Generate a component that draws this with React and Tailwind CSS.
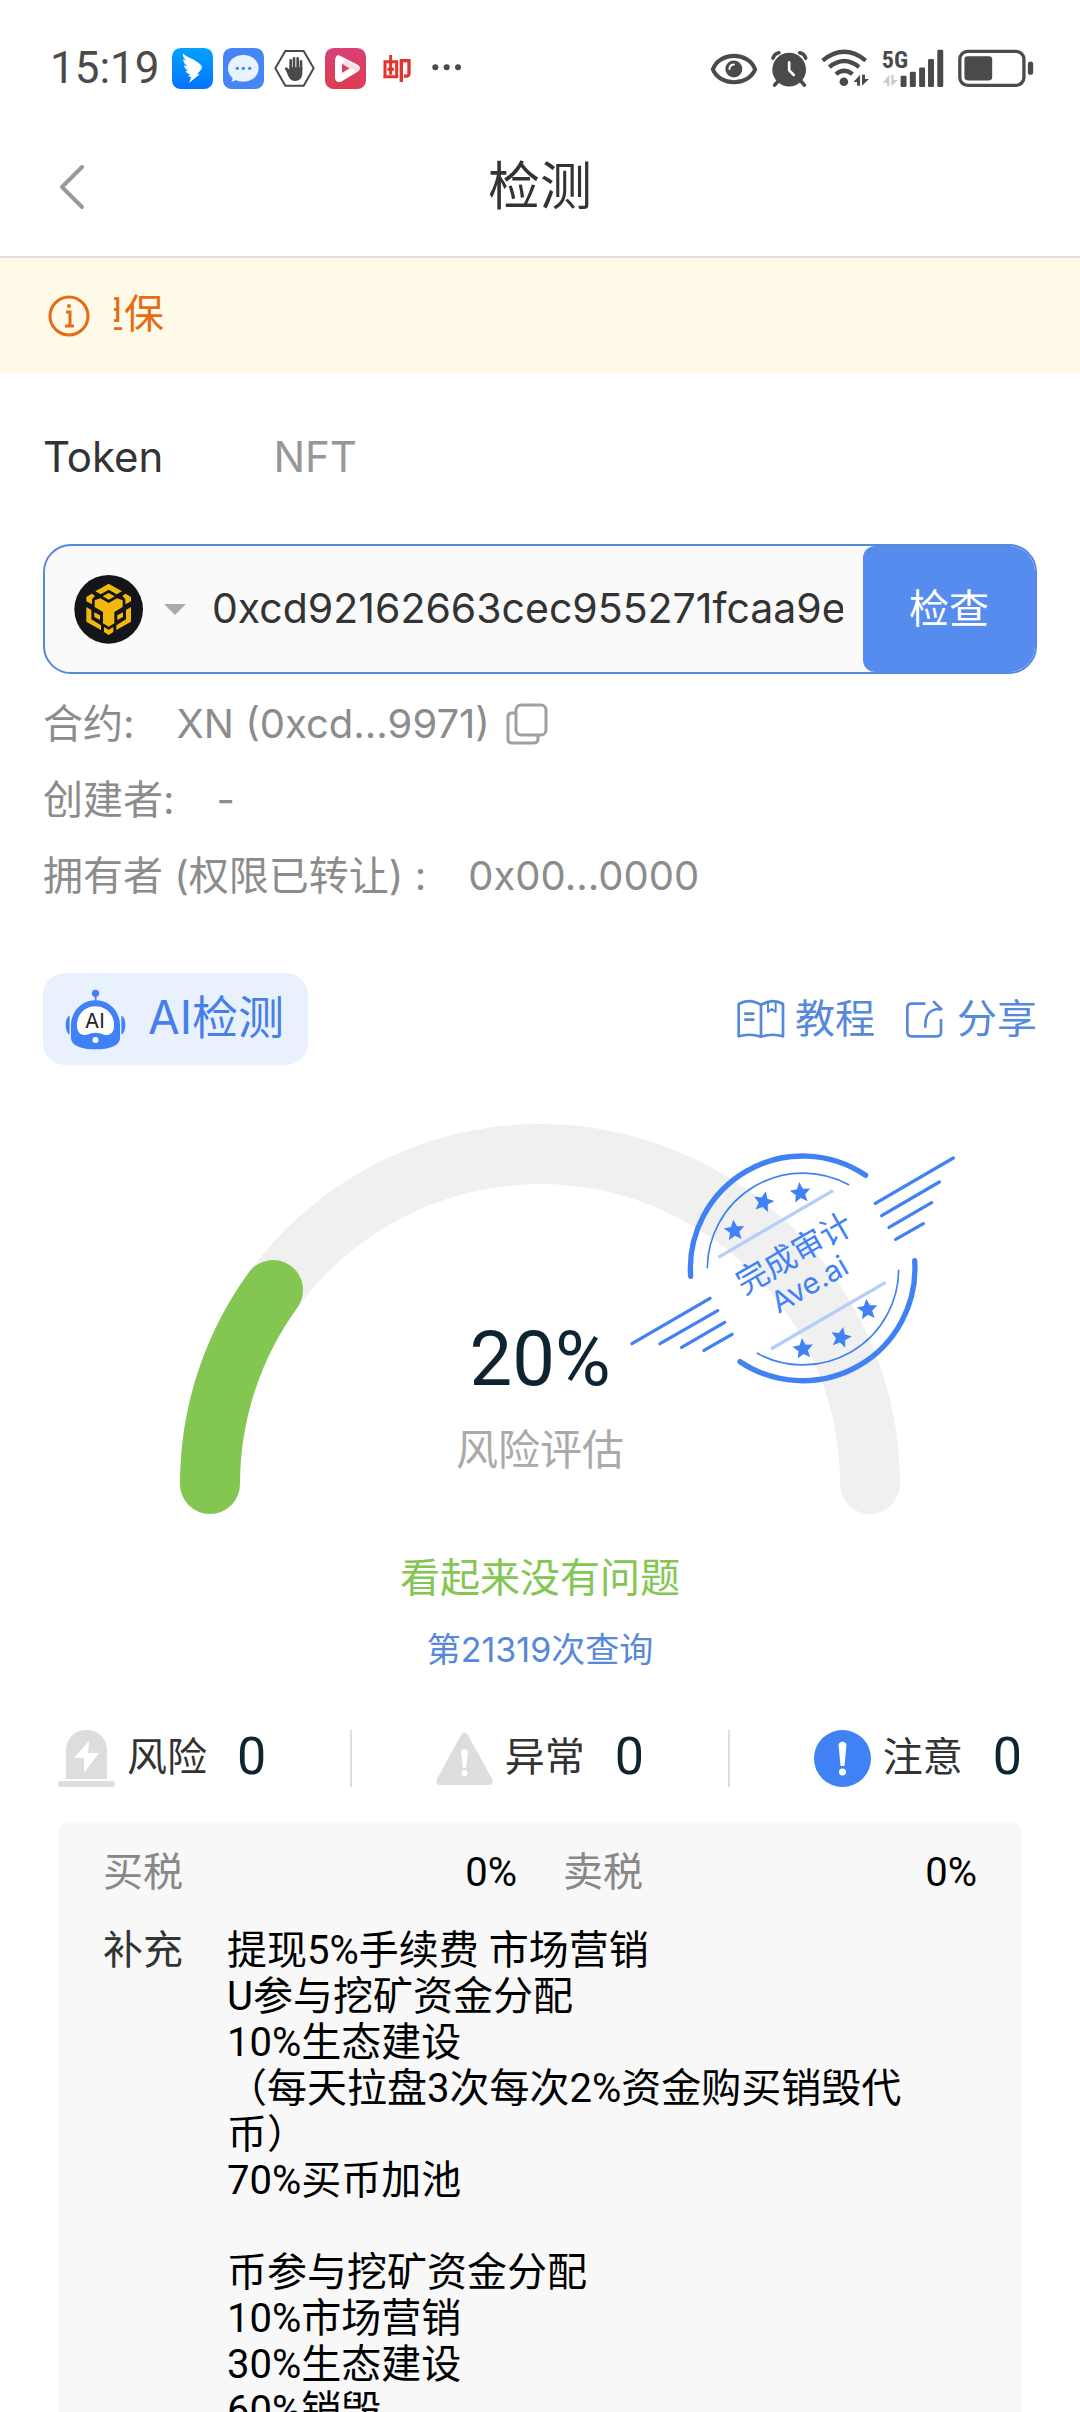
import React, { useState } from "react";

const STAR = "M0 -32 L9 -11 L31 -9 L14 6 L19 28 L0 16 L-19 28 L-14 6 L-31 -9 L-9 -11 Z";

const stampStars = [
    [343, 301],
    [431, 215],
    [541, 188],
    [742, 538],
    [663, 622],
    [549, 656],
];

const stampLines = [
    [766, 220, 1000, 84],
    [785, 257, 958, 156],
    [807, 292, 935, 218],
    [827, 328, 910, 281],
    [36, 641, 270, 505],
    [120, 641, 293, 542],
    [185, 652, 314, 577],
    [252, 661, 336, 613],
];

const supplement = `提现5%手续费 市场营销
U参与挖矿资金分配
10%生态建设
（每天拉盘3次每次2%资金购买销毁代币）
70%买币加池

币参与挖矿资金分配
10%市场营销
30%生态建设
60%销毁`;

function StatusBar() {
    return (
        <div className="flex h-[118px] shrink-0 items-center justify-between pt-[18px] pr-[46px] pl-[50px] text-[#4a4a4a]">
            <div className="flex items-center gap-[10px]">
                <span className="mr-[2px] font-[Roboto] text-[44px] leading-none">15:19</span>
                <svg viewBox="0 0 123 123" className="size-[41px]">
                    <defs>
                        <linearGradient id="wing" x1="0" y1="0" x2="0" y2="1">
                            <stop offset="0" stopColor="#02a2fe" />
                            <stop offset="1" stopColor="#0673fc" />
                        </linearGradient>
                    </defs>
                    <rect width="123" height="123" rx="26" fill="url(#wing)" />
                    <path
                        fill="#fff"
                        d="M33 16 C38 24 55 30 70 38 C82 45 90 52 90 58 C90 64 80 73 76 79 L83 79 L51 105 L58 87 L48 85 L55 79 C47 78 42 73 41 68 L50 68 C42 65 37 59 36 52 L48 55 C38 49 33 41 34 33 L44 38 C35 31 31 24 33 16 Z"
                    />
                </svg>
                <svg viewBox="0 0 123 123" className="size-[41px]">
                    <rect width="123" height="123" rx="26" fill="#4585f5" />
                    <path
                        fill="#e8f3fe"
                        d="M61 21 C87 21 107 38 107 61 C107 84 87 101 61 101 C52 101 44 99 38 96 C34 99 30 101 25 101 C28 97 29 94 28 89 C19 82 15 72 15 61 C15 38 35 21 61 21 Z"
                    />
                    <circle cx="43" cy="61" r="5" fill="#4585f5" />
                    <circle cx="61" cy="61" r="5" fill="#4585f5" />
                    <circle cx="80" cy="61" r="5" fill="#4585f5" />
                </svg>
                <svg viewBox="0 0 123 123" className="size-[41px]" fill="none" stroke="currentColor">
                    <path strokeWidth="6" strokeLinejoin="round" d="M34 9 H89 L119 61 L89 113 H34 L4 61 Z" />
                    <path strokeWidth="8" strokeLinecap="round" d="M50 66 V37 M60 66 V31 M71 66 V31 M81 66 V40 M37 62 L48 76" />
                    <path
                        fill="currentColor"
                        stroke="none"
                        d="M46 58 H85 V75 C85 90 76 99 64 99 C55 99 49 95 44 86 L34 64 Q41 59 46 66 Z"
                    />
                </svg>
                <svg viewBox="0 0 123 123" className="size-[41px]">
                    <defs>
                        <linearGradient id="play" x1="0" y1="0" x2="0" y2="1">
                            <stop offset="0" stopColor="#d83f78" />
                            <stop offset="1" stopColor="#de3d50" />
                        </linearGradient>
                    </defs>
                    <rect width="123" height="123" rx="26" fill="url(#play)" />
                    <path
                        fill="#fff"
                        d="M45 23 L98 50 Q112 60 98 71 L48 101 Q30 106 30 88 V37 Q32 18 45 23 Z"
                    />
                    <path fill="#d83f60" d="M51 47 L74 61 L51 75 Z" />
                    <path fill="#f5c4d2" d="M51 47 L74 61 L98 71 L104 62 L62 36 Z" opacity="0.5" />
                </svg>
                <svg viewBox="0 0 123 123" className="size-[41px]" fill="none" stroke="#e4322e" strokeWidth="9">
                    <path d="M27 89 V41 H62 V89 M22 86 H66 M44 21 V80 M34 64 H54" />
                    <path d="M76 102 V38 H99 V78 Q98 86 84 84" strokeWidth="10" />
                </svg>
                <svg viewBox="0 0 123 123" className="size-[41px]" fill="currentColor">
                    <circle cx="25" cy="58" r="9" />
                    <circle cx="59" cy="58" r="9" />
                    <circle cx="93" cy="58" r="9" />
                </svg>
            </div>
            <div className="flex items-center gap-3">
                <svg viewBox="60 54 141 118" className="h-10 w-12">
                    <path
                        fill="none"
                        stroke="currentColor"
                        strokeWidth="12"
                        strokeLinejoin="round"
                        d="M68 117 C88 64 173 64 193 117 C173 168 88 168 68 117 Z"
                    />
                    <circle cx="130" cy="116" r="25" fill="currentColor" />
                    <path d="M117 116 Q118 104 130 103" fill="none" stroke="#fff" strokeWidth="6" strokeLinecap="round" />
                </svg>
                <svg viewBox="240 54 118 120" className="h-10 w-[39px]" fill="none" stroke="currentColor">
                    <circle cx="298" cy="119" r="51" fill="currentColor" stroke="none" />
                    <path strokeWidth="11" strokeLinecap="round" d="M249 84 Q254 70 267 68 M348 84 Q343 70 330 68 M263 155 L254 166 M335 155 L344 166" />
                    <path stroke="#fff" strokeWidth="8" strokeLinecap="round" d="M298 97 V121 L312 135" />
                </svg>
                <svg viewBox="398 54 148 118" className="h-[39px] w-[49px]" fill="none" stroke="currentColor">
                    <path strokeWidth="13" d="M403 89 Q468 36 533 89 M423 109 Q468 72 513 109 M443 130 Q468 110 493 130" />
                    <circle cx="467" cy="153" r="13" fill="currentColor" stroke="none" />
                    <path fill="currentColor" stroke="none" d="M516 132 V165 H507 V154 H496 Z M522 132 H531 V145 H543 L522 165 Z" />
                </svg>
                <svg viewBox="572 54 190 118" className="h-[39px] w-[63px] overflow-visible" fill="currentColor">
                    <text x="571" y="111" fontSize="73" className="font-[Roboto_Condensed,Roboto] font-bold">
                        5G
                    </text>
                    <path fill="#ccc" d="M594 132 V167 H587 V156 H574 Z M600 132 H607 V148 H620 L600 167 Z" />
                    <rect x="628" y="135" width="18" height="34" rx="4" />
                    <rect x="656" y="123" width="18" height="46" rx="4" />
                    <rect x="684" y="110" width="18" height="59" rx="4" />
                    <rect x="711" y="84" width="18" height="85" rx="4" />
                    <rect x="739" y="56" width="18" height="113" rx="4" />
                </svg>
                <svg viewBox="800 54 230 118" className="h-[39px] w-[77px]">
                    <rect x="807" y="61" width="194" height="103" rx="24" fill="none" stroke="currentColor" strokeWidth="10" />
                    <rect x="821" y="76" width="84" height="73" rx="10" fill="currentColor" />
                    <rect x="1013" y="92" width="16" height="40" rx="8" fill="currentColor" />
                </svg>
            </div>
        </div>
    );
}

function ChainLogo() {
    return (
        <svg viewBox="132 135 207 207" className="size-[69px] shrink-0">
            <circle cx="236" cy="238" r="103" fill="#14151a" />
            <g fill="#f0b90b">
                <path d="M196 184 L236 161 L276 184 L260 193 L236 179 L212 193 Z" />
                <path d="M218 199 L236 189 L254 199 L236 209 Z" />
                <path d="M169 201 L185 191 L195 197 L186 208 V223 L169 214 Z" />
                <path d="M303 201 L287 191 L277 197 L286 208 V223 L303 214 Z" />
                <path d="M194 211 L211 205 L236 219 L261 205 L278 211 V231 L253 246 V280 L236 290 L219 280 V246 L194 231 Z" />
                <path d="M169 231 L184 240 V268 L213 286 V300 L169 275 Z" />
                <path d="M303 231 L288 240 V268 L259 286 V300 L303 275 Z" />
                <path d="M193 247 L210 256 V270 L193 261 Z" />
                <path d="M279 247 L262 256 V270 L279 261 Z" />
                <path d="M222 291 L236 299 L250 291 V306 L236 315 L222 306 Z" />
            </g>
        </svg>
    );
}

function RobotIcon() {
    return (
        <svg viewBox="106 115 184 184" className="size-[61px]">
            <g fill="#4181f6">
                <circle cx="198" cy="128" r="11" />
                <rect x="196" y="136" width="5" height="16" />
                <path d="M198 149 C240 149 272 182 272 226 V262 C272 286 240 297 198 297 C156 297 124 286 124 262 V226 C124 182 156 149 198 149 Z" />
                <path d="M120 195 V252 C104 246 104 201 120 195 Z" />
                <path d="M276 195 V252 C292 246 292 201 276 195 Z" />
            </g>
            <path
                fill="#fff"
                d="M198 167 C231 167 254 192 254 224 C254 248 240 256 224 253 C214 250 208 247 198 247 C188 247 182 250 172 253 C156 256 142 248 142 224 C142 192 165 167 198 167 Z"
            />
            <circle cx="198" cy="269" r="9" fill="#fff" />
            <text x="196" y="234" textAnchor="middle" fontSize="62" fill="#222" className="font-[Inter]">
                AI
            </text>
        </svg>
    );
}

function Stamp() {
    return (
        <svg
            viewBox="0 0 1050 840"
            className="absolute top-[6px] left-[440px] w-[350px]"
            fill="none"
            stroke="#4181f6"
            strokeLinecap="round"
        >
            <path strokeWidth="16" d="M212 439 A337 337 0 0 1 737 136 M884 392 A337 337 0 0 1 360 695" />
            <path strokeWidth="5" d="M262 413 A287 287 0 0 1 686 164 M836 421 A287 287 0 0 1 412 670" />
            <path strokeWidth="10" stroke="#b5cdf9" strokeLinecap="butt" d="M295 382 L639 182 M453 657 L797 457" />
            {stampLines.map(([x1, y1, x2, y2]) => (
                <line key={x1} x1={x1} y1={y1} x2={x2} y2={y2} strokeWidth="10" />
            ))}
            <g fill="#4181f6" stroke="none">
                {stampStars.map(([x, y], i) => (
                    <path key={x} d={STAR} transform={`translate(${x} ${y}) rotate(${i % 3 === 1 ? 12 : -6})`} />
                ))}
                <g textAnchor="middle" transform="translate(549 417) rotate(-30)">
                    <text y="-20" fontSize="96">
                        完成审计
                    </text>
                    <text x="-6" y="80" fontSize="88">
                        Ave.ai
                    </text>
                </g>
            </g>
        </svg>
    );
}

function Gauge({ percent }) {
    const angle = Math.PI * (1 - percent / 100);
    const x = 360 + 330 * Math.cos(angle);
    const y = 360 - 330 * Math.sin(angle);

    return (
        <div className="relative mx-auto mt-[59px] grid w-[720px]">
            <svg viewBox="0 0 720 390" className="col-start-1 row-start-1 w-full" fill="none" strokeWidth="60" strokeLinecap="round">
                <path stroke="#f0f0f0" d="M30 360 A330 330 0 0 1 690 360" />
                <path stroke="#83c651" d={`M30 360 A330 330 0 0 1 ${x} ${y}`} />
            </svg>
            <div className="col-start-1 row-start-1 flex flex-col items-center self-end pb-[34px]">
                <span className="font-[Roboto] text-[76px] leading-[90px] text-[#0e2431]">{percent}%</span>
                <span className="mt-4 text-[42px] leading-[60px] text-[#aaa]">风险评估</span>
            </div>
            <Stamp />
        </div>
    );
}

function Stat({ icon, label, count }) {
    return (
        <div className="flex items-start">
            {icon}
            <span className="ml-3 text-[40px] leading-[54px] text-[#333]">{label}</span>
            <span className="ml-[30px] font-[Roboto] text-[52px] leading-[54px] text-[#0e2431]">{count}</span>
        </div>
    );
}

export default function App() {
    const [tab, setTab] = useState("Token");
    const [address, setAddress] = useState("0xcd92162663cec955271fcaa9e");

    return (
        <div className="flex h-screen flex-col overflow-hidden bg-white font-[Inter,'Noto_Sans_CJK_SC',sans-serif]">
            <StatusBar />

            <header className="grid h-[140px] shrink-0 grid-cols-[1fr_auto_1fr] items-center border-b-2 border-[#dcdee0] px-[58px]">
                <button aria-label="返回" className="w-7">
                    <svg viewBox="0 0 28 48" className="w-7" fill="none" stroke="#999" strokeWidth="4" strokeLinecap="round" strokeLinejoin="round">
                        <path d="M24 4 L4 24 L24 44" />
                    </svg>
                </button>
                <h1 className="text-[52px] leading-none text-[#333]">检测</h1>
            </header>

            <div className="flex h-[115px] shrink-0 items-center bg-[#fffae8] px-12 text-[#e46c14]">
                <svg viewBox="0 0 42 42" className="size-[42px]" fill="none" stroke="currentColor" strokeWidth="3">
                    <circle cx="21" cy="21" r="19" />
                    <path d="M18 17 H22 V31 M17 31 H26" />
                    <circle cx="21" cy="11" r="2" fill="currentColor" stroke="none" />
                </svg>
                <p className="ml-6 flex-1 overflow-hidden pb-1 -indent-[30px] text-[40px] leading-[60px] whitespace-nowrap">担保</p>
            </div>

            <main className="px-[43px] pt-14">
                <nav className="flex gap-[110px] text-[42px] leading-[56px]">
                    {["Token", "NFT"].map((name) => (
                        <button
                            key={name}
                            onClick={() => setTab(name)}
                            className={tab === name ? "text-[#333]" : "text-[#969799]"}
                        >
                            {name}
                        </button>
                    ))}
                </nav>

                <form
                    onSubmit={(e) => e.preventDefault()}
                    className="mt-[59px] flex h-[130px] items-center overflow-hidden rounded-[28px] border-2 border-[#5688dc] bg-[#fafafa] pl-[29px]"
                >
                    <button type="button" aria-label="选择链" className="flex items-center gap-[21px]">
                        <ChainLogo />
                        <svg viewBox="0 0 22 11" className="w-[22px]" fill="#aaa">
                            <path d="M0 0 H22 L11 11 Z" />
                        </svg>
                    </button>
                    <input
                        aria-label="合约地址"
                        value={address}
                        onChange={(e) => setAddress(e.target.value)}
                        className="mr-5 ml-[26px] min-w-0 flex-1 bg-transparent text-[41px] text-[#333] outline-none"
                    />
                    <button className="w-[172px] self-stretch rounded-l-xl bg-[#568cee] text-[40px] text-white">检查</button>
                </form>

                <dl className="mt-3 text-[40px] leading-[76px] text-[#8c8c8c]">
                    <div className="flex items-center">
                        <dt>合约:</dt>
                        <dd className="ml-[42px] flex items-center gap-4">
                            XN (0xcd...9971)
                            <button aria-label="复制">
                                <svg viewBox="0 0 42 42" className="size-[42px]" fill="none" stroke="#a0a0a0" strokeWidth="3">
                                    <rect x="10" y="2" width="30" height="30" rx="5" />
                                    <path d="M10 10 H6 Q2 10 2 14 V36 Q2 40 6 40 H27 Q32 40 32 36 V32" />
                                </svg>
                            </button>
                        </dd>
                    </div>
                    <div className="flex items-center">
                        <dt>创建者:</dt>
                        <dd className="ml-[42px]">-</dd>
                    </div>
                    <div className="flex items-center">
                        <dt>拥有者 (权限已转让) :</dt>
                        <dd className="ml-[42px]">0x00...0000</dd>
                    </div>
                </dl>

                <div className="mt-[59px] flex items-center justify-between">
                    <button className="flex h-[92px] items-center gap-[22px] rounded-[22px] bg-[#eaf1fe] pr-6 pl-[22px] text-[46px] leading-[60px] text-[#457fe8]">
                        <RobotIcon />
                        <span className="pb-1">AI检测</span>
                    </button>
                    <div className="flex gap-[30px] text-[40px] text-[#5688dc]">
                        <a href="#guide" className="flex items-center gap-[10px]">
                            <svg viewBox="54 80 144 120" className="h-10 w-12" fill="none" stroke="currentColor" strokeWidth="8" strokeLinejoin="round">
                                <path d="M126 98 Q92 76 59 95 V192 Q92 182 126 193 Q160 182 192 192 V95 Q160 76 126 98 Z M126 98 V193" />
                                <path d="M147 88 V119 L158 110 L170 119 V88" strokeWidth="6" />
                                <path d="M79 124 H103 M79 142 H103" strokeLinecap="round" />
                            </svg>
                            教程
                        </a>
                        <a href="#share" className="flex items-center gap-[14px]">
                            <svg viewBox="558 86 114 114" className="size-[38px]" fill="none" stroke="currentColor" strokeWidth="8" strokeLinecap="round">
                                <path d="M616 97 H578 Q565 97 565 110 V182 Q565 195 578 195 H653 Q666 195 666 182 V146" />
                                <path d="M619 166 Q617 112 664 113 M645 92 L666 113 L662 115" />
                            </svg>
                            分享
                        </a>
                    </div>
                </div>

                <Gauge percent={20} />

                <div className="mt-[34px] flex flex-col items-center gap-3 leading-[60px]">
                    <p className="text-[40px] text-[#83c651]">看起来没有问题</p>
                    <p className="text-[34px] text-[#5688dc]">第21319次查询</p>
                </div>

                <div className="mx-[15px] mt-[50px] flex justify-between">
                    <Stat
                        label="风险"
                        count={0}
                        icon={
                            <svg viewBox="0 0 57 57" className="size-[57px]" fill="#ddd">
                                <path d="M8 49 V21 C8 8 17 0 28.500 0 C40 0 49 8 49 21 V49 Z" />
                                <rect y="51" width="57" height="6" rx="2" />
                                <path fill="#fff" d="M31 11 L16 28 H26 L26 43 L41 23 H30 Z" />
                            </svg>
                        }
                    />
                    <div className="w-[2px] bg-[#ddd]" />
                    <Stat
                        label="异常"
                        count={0}
                        icon={
                            <svg viewBox="0 0 57 57" className="size-[57px]" fill="#ddd">
                                <path d="M25 5 Q28.500 0 32 5 L56 49 Q58 55 53 55 H4 Q-1 55 1 49 Z" />
                                <path fill="#fff" d="M25 21 Q28.500 17 32 21 L30 38 H27 Z" />
                                <circle cx="28.500" cy="43" r="3" fill="#fff" />
                            </svg>
                        }
                    />
                    <div className="w-[2px] bg-[#ddd]" />
                    <Stat
                        label="注意"
                        count={0}
                        icon={
                            <svg viewBox="0 0 57 57" className="size-[57px]" fill="#4181f6">
                                <circle cx="28.500" cy="28.500" r="28.500" />
                                <path fill="#fff" d="M24.500 14 Q28.500 9 32.500 14 L30.500 36 H26.500 Z" />
                                <circle cx="28.500" cy="42" r="3.500" fill="#fff" />
                            </svg>
                        }
                    />
                </div>

                <section className="mx-[15px] mt-[35px] rounded-xl bg-[#f8f8f8] px-[45px] pt-7 pb-10 font-[Roboto,'Noto_Sans_CJK_SC',sans-serif] text-[40px] leading-[46px] text-black">
                    <div className="grid grid-cols-2 gap-[46px]">
                        <div className="flex justify-between">
                            <span className="text-[#888]">买税</span>
                            <span>0%</span>
                        </div>
                        <div className="flex justify-between">
                            <span className="text-[#888]">卖税</span>
                            <span>0%</span>
                        </div>
                    </div>
                    <div className="mt-8 flex gap-11">
                        <span className="shrink-0 text-[#333]">补充</span>
                        <p className="whitespace-pre-wrap">{supplement}</p>
                    </div>
                </section>
            </main>
        </div>
    );
}
